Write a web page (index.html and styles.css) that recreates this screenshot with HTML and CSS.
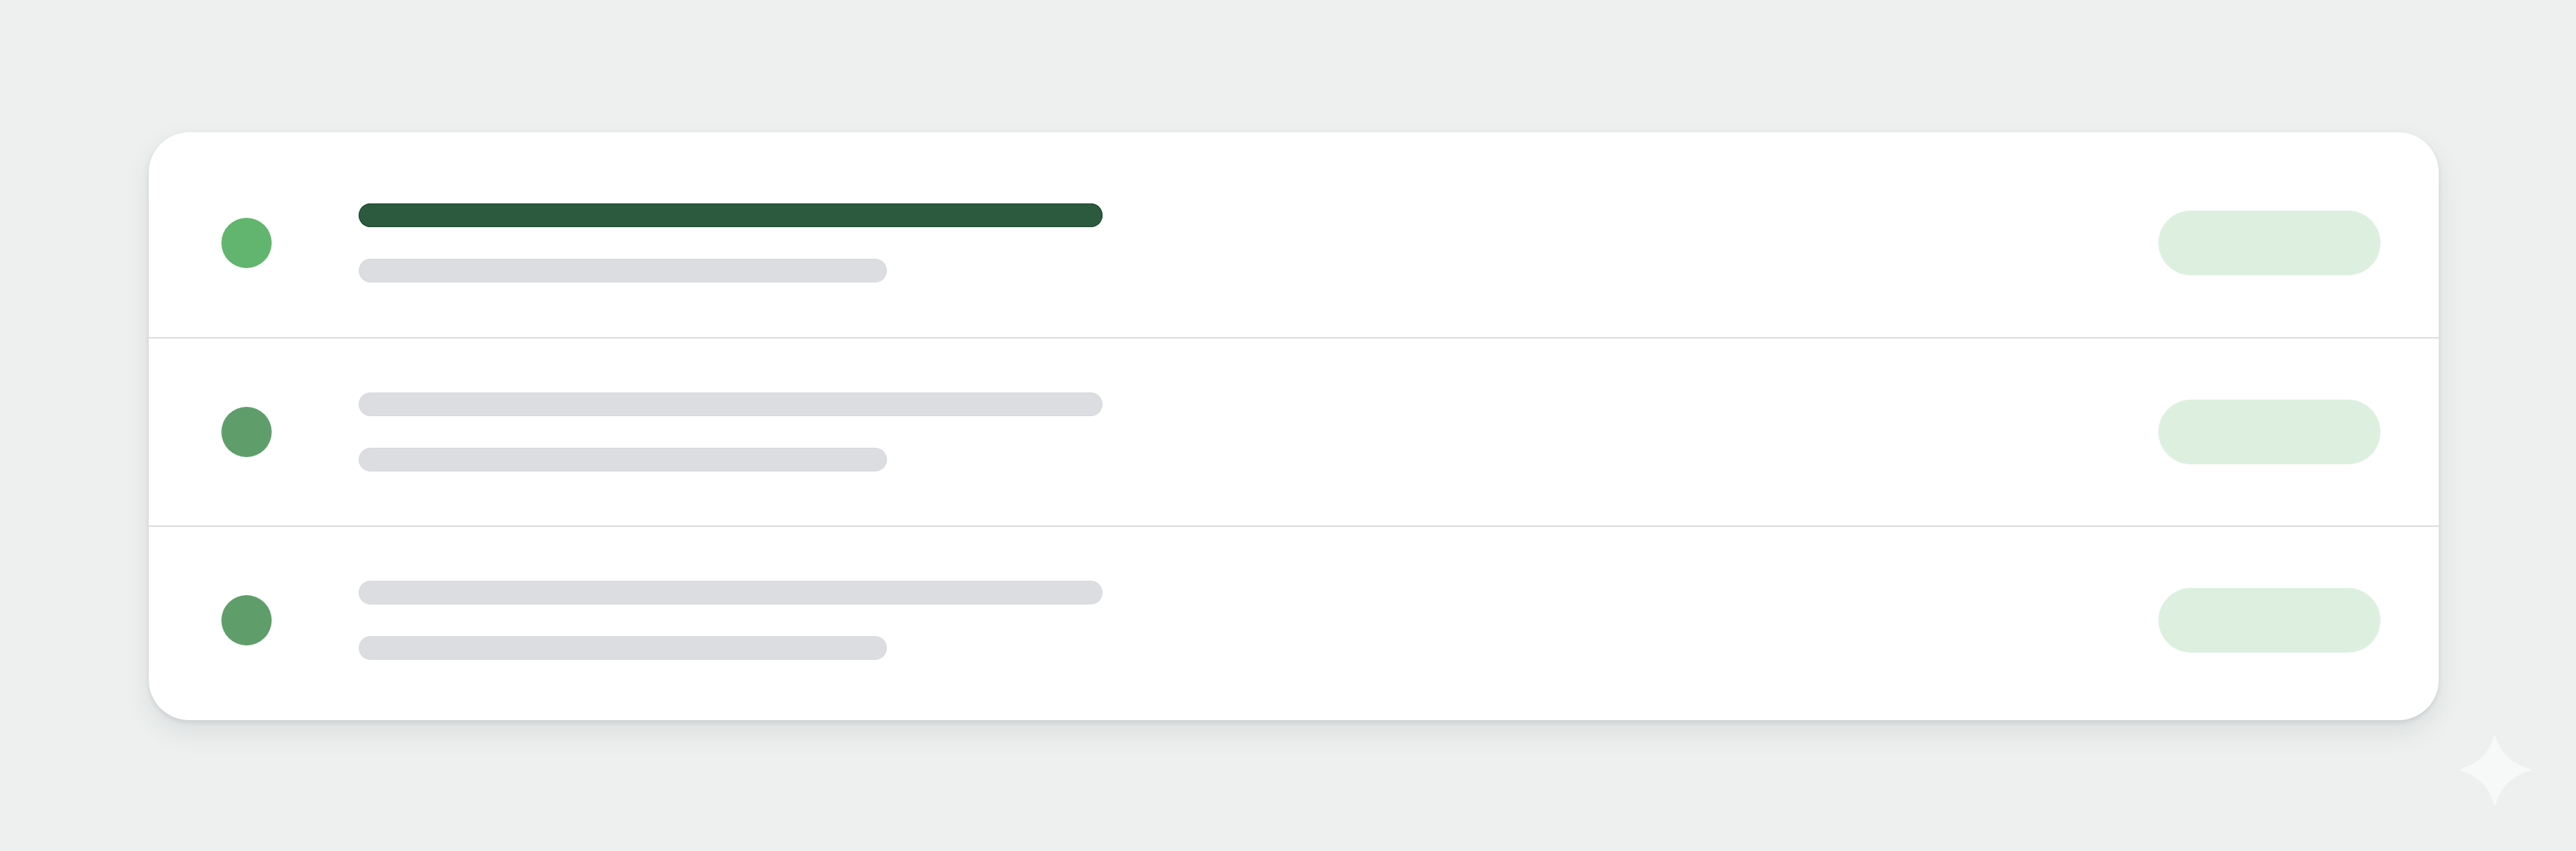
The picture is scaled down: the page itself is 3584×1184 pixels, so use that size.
FILE: index.html
```html
<!DOCTYPE html>
<html>
<head>
<meta charset="utf-8">
<link rel="stylesheet" href="styles.css">
</head>
<body>
<div class="stage">
  <div class="card">
    <div class="row">
      <span class="dot dot-active"></span>
      <div class="lines">
        <span class="bar bar-title bar-dark"></span>
        <span class="bar bar-sub"></span>
      </div>
      <span class="pill"></span>
    </div>
    <div class="row">
      <span class="dot"></span>
      <div class="lines">
        <span class="bar bar-title"></span>
        <span class="bar bar-sub"></span>
      </div>
      <span class="pill"></span>
    </div>
    <div class="row">
      <span class="dot"></span>
      <div class="lines">
        <span class="bar bar-title"></span>
        <span class="bar bar-sub"></span>
      </div>
      <span class="pill"></span>
    </div>
  </div>
  <svg class="sparkle" width="98" height="96" viewBox="0 0 98 96">
    <path d="M48 0 Q58 37 98 47 Q58 58 48 96 Q38 58 0 47 Q38 37 48 0 Z" fill="#f7f8f8" stroke="#f7f8f8" stroke-width="2" stroke-linejoin="round"/>
  </svg>
</div>
</body>
</html>
```

FILE: styles.css
```css
html, body {
  margin: 0;
  padding: 0;
  background: #eef0f0;
  font-family: "Liberation Sans", Arial, sans-serif;
}

.stage {
  position: relative;
  width: 3584px;
  height: 1184px;
  box-sizing: border-box;
  padding: 184px 191px 0 207px;
}

.card {
  background: #ffffff;
  border-radius: 56px;
  padding: 23px 0 9px 0;
  box-shadow: 0 16px 36px rgba(60, 64, 67, 0.10), 0 3px 6px rgba(60, 64, 67, 0.12);
}

.row {
  display: flex;
  align-items: center;
  height: 262px;
  padding: 0 81px 0 101px;
}

.row + .row {
  border-top: 2px solid #dcdcdc;
  height: 260px;
}

.dot {
  flex: none;
  width: 70px;
  height: 70px;
  border-radius: 50%;
  background: #5f9e6b;
}

.dot-active {
  background: #62b56e;
}

.lines {
  display: flex;
  flex-direction: column;
  gap: 44px;
  margin-left: 121px;
  width: 1035px;
}

.bar {
  display: block;
  height: 33px;
  border-radius: 17px;
  background: #dcdde1;
  box-shadow: inset 0 0 0 1px rgba(0, 0, 0, 0.02);
}

.bar-title {
  width: 1035px;
}

.bar-sub {
  width: 735px;
}

.bar-dark {
  background: #2b5a3e;
  box-shadow: inset 0 0 0 1px #1f4730;
}

.pill {
  flex: none;
  margin-left: auto;
  width: 309px;
  height: 90px;
  border-radius: 45px;
  background: #ddf0e0;
}

.sparkle {
  position: absolute;
  left: 3423px;
  top: 1024px;
}
```
